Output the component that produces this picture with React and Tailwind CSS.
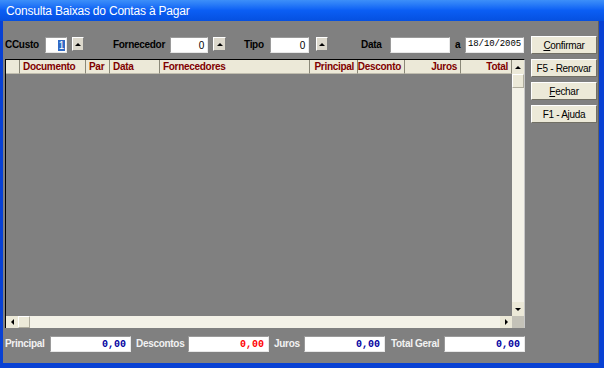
import React from 'react'

const sunken = 'bg-white border-t border-l border-[#9a9a9a] border-b border-r border-b-[#e8e8e8] border-r-[#e8e8e8]'
const raised = 'bg-[#ece9d8] border border-t-white border-l-white border-b-[#716f64] border-r-[#716f64]'

function UpArrow() {
  return <div className="w-0 h-0 border-l-[3px] border-r-[3px] border-b-[3px] border-l-transparent border-r-transparent border-b-black" />
}

function DownArrow() {
  return <div className="w-0 h-0 border-l-[3px] border-r-[3px] border-t-[3px] border-l-transparent border-r-transparent border-t-black" />
}

function LeftArrow() {
  return <div className="w-0 h-0 border-t-[3px] border-b-[3px] border-r-[3px] border-t-transparent border-b-transparent border-r-black" />
}

function RightArrow() {
  return <div className="w-0 h-0 border-t-[3px] border-b-[3px] border-l-[3px] border-t-transparent border-b-transparent border-l-black" />
}

function Spin({ className }) {
  return (
    <div className={`h-[14px] flex items-center justify-center bg-[#dcd8cc] border border-t-white border-l-white border-b-[#808080] border-r-[#808080] ${className}`}>
      <UpArrow />
    </div>
  )
}

const columns = [
  { label: '', w: 'w-[14px]', align: '' },
  { label: 'Documento', w: 'w-[66px]', align: 'justify-start pl-[3px]' },
  { label: 'Par', w: 'w-[24px]', align: 'justify-start pl-[3px]' },
  { label: 'Data', w: 'w-[50px]', align: 'justify-start pl-[3px]' },
  { label: 'Fornecedores', w: 'w-[150px]', align: 'justify-start pl-[3px]' },
  { label: 'Principal', w: 'w-[48px]', align: 'justify-end pr-[3px]' },
  { label: 'Desconto', w: 'w-[47px]', align: 'justify-end pr-[3px]' },
  { label: 'Juros', w: 'w-[56px]', align: 'justify-end pr-[3px]' },
  { label: 'Total', w: 'w-[51px]', align: 'justify-end pr-[3px]' },
]

const totals = [
  { label: 'Principal', lw: 'w-[45px]', color: 'text-[#0000a0]' },
  { label: 'Descontos', lw: 'w-[52px] ml-[5px]', color: 'text-[#ff0000]' },
  { label: 'Juros', lw: 'w-[30px] ml-[5px]', color: 'text-[#0000a0]' },
  { label: 'Total Geral', lw: 'w-[53px] ml-[6px]', color: 'text-[#0000a0]' },
]

const buttons = [
  { pre: '', u: 'C', post: 'onfirmar' },
  { pre: 'F5 - Renovar', u: '', post: '' },
  { pre: '', u: 'F', post: 'echar' },
  { pre: 'F1 - Ajuda', u: '', post: '' },
]

export default function App() {
  return (
    <div className="w-[604px] h-[368px] flex flex-col bg-[#0841d4] font-['Liberation_Sans',Arial,sans-serif] overflow-hidden">
      {/* Title bar */}
      <div className="h-[21px] shrink-0 flex items-center pl-[6px] bg-gradient-to-b from-[#3d8ff9] via-[#0b5ef4] to-[#0550e0] text-white text-[12px] tracking-[-0.2px]">
        Consulta Baixas do Contas à Pagar
      </div>

      {/* Body */}
      <div className="flex-1 ml-[3px] mr-[5px] mb-[5px] bg-[#808080] flex border-r border-[#5f5f5f]">
        <div className="w-[522px] pl-[2px] flex flex-col">
          {/* Filters */}
          <div className="mt-[16px] h-[16px] flex items-center text-[10px] font-bold text-black tracking-[-0.3px]">
            <span className="w-[40px] -mt-[2px]">CCusto</span>
            <div className={`w-[22px] h-[16px] ${sunken} flex items-center justify-end pr-[1px]`}>
              <span className="bg-[#316ac5] text-white font-normal text-[10px] px-[1px] leading-[11px]">1</span>
            </div>
            <Spin className="ml-[5px] w-[12px] self-start" />
            <span className="ml-[29px] w-[57px] -mt-[2px]">Fornecedor</span>
            <div className={`w-[38px] h-[16px] ${sunken} flex items-center justify-end pr-[3px] font-normal`}>0</div>
            <Spin className="ml-[5px] w-[13px] self-start" />
            <span className="ml-[18px] w-[26px] -mt-[2px]">Tipo</span>
            <div className={`w-[39px] h-[16px] ${sunken} flex items-center justify-end pr-[3px] font-normal`}>0</div>
            <Spin className="ml-[7px] w-[12px] self-start" />
            <span className="ml-[33px] w-[29px] -mt-[2px]">Data</span>
            <div className={`w-[60px] h-[16px] ${sunken}`} />
            <span className="ml-[5px] w-[10px] -mt-[2px]">a</span>
            <div className={`w-[59px] h-[16px] ${sunken} flex items-center pl-[2px] font-normal font-['Liberation_Mono',monospace] text-[9px] tracking-[-0.1px]`}>18/10/2005</div>
          </div>

          {/* Grid */}
          <div className="mt-[6px] w-[520px] h-[269px] flex flex-col border-l border-t border-black border-r border-r-[#c8c8c8]">
            <div className="h-[14px] flex shrink-0">
              {columns.map((c, i) => (
                <div key={i} className={`${c.w} h-full flex items-center bg-[#ece9d8] border-r border-[#8a8878] border-b border-b-[#c0bdae] ${c.align} text-[10px] font-bold text-[#800000] tracking-[-0.3px]`}>
                  {c.label}
                </div>
              ))}
              <div className="w-[12px] h-full bg-[#ece9d8] flex items-center justify-center">
                <UpArrow />
              </div>
            </div>
            <div className="flex-1 flex">
              <div className="flex-1" />
              <div className="w-[12px] flex flex-col bg-[#f4f2e8]">
                <div className="h-[14px] bg-[#ece9d8] border border-t-white border-l-white border-b-[#b0ad9e] border-r-[#b0ad9e]" />
                <div className="flex-1" />
                <div className="h-[14px] bg-[#ece9d8] flex items-center justify-center">
                  <DownArrow />
                </div>
              </div>
            </div>
            <div className="h-[12px] shrink-0 flex bg-[#f4f2e8]">
              <div className="w-[12px] bg-[#ece9d8] flex items-center justify-center">
                <LeftArrow />
              </div>
              <div className="w-[12px] bg-[#ece9d8] border border-t-white border-l-white border-b-[#b0ad9e] border-r-[#b0ad9e]" />
              <div className="flex-1" />
              <div className="w-[12px] bg-[#ece9d8] flex items-center justify-center">
                <RightArrow />
              </div>
              <div className="w-[12px] bg-[#c4c2b8]" />
            </div>
          </div>

          {/* Totals */}
          <div className="mt-[8px] h-[16px] flex items-center text-[10px] font-bold text-[#f2f2f2] tracking-[-0.3px]">
            {totals.map((t) => (
              <React.Fragment key={t.label}>
                <span className={`${t.lw} -mt-[2px]`}>{t.label}</span>
                <div className={`w-[81px] h-[16px] ${sunken} flex items-center justify-end pr-[4px] font-['Liberation_Mono',monospace] text-[10px] font-bold tracking-[0px] ${t.color}`}>
                  0,00
                </div>
              </React.Fragment>
            ))}
          </div>
        </div>

        {/* Buttons */}
        <div className="ml-[6px] mt-[15px] w-[66px] flex flex-col gap-[5px]">
          {buttons.map((b, i) => (
            <div key={i} className={`h-[18px] ${raised} flex items-center justify-center text-[10px] text-black tracking-[-0.3px]`}>
              {b.pre}
              {b.u && <span className="underline">{b.u}</span>}
              {b.post}
            </div>
          ))}
        </div>
      </div>
    </div>
  )
}
